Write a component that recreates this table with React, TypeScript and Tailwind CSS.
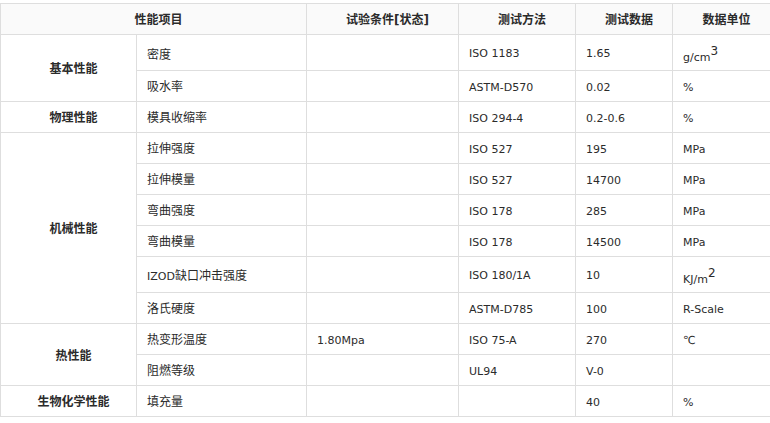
import React from "react";

type Row = {
  group?: { label: string; span: number };
  item: React.ReactNode;
  cond?: string;
  method?: string;
  value?: string;
  unit?: React.ReactNode;
  tall?: boolean;
};

const L = ({ children }: { children: React.ReactNode }) => (
  <span className="text-[11px]">{children}</span>
);

const rows: Row[] = [
  { group: { label: "基本性能", span: 2 }, item: "密度", method: "ISO 1183", value: "1.65", unit: (<><L>g/cm</L><sup className="text-[12px]">3</sup></>), tall: true },
  { item: "吸水率", method: "ASTM-D570", value: "0.02", unit: "%" },
  { group: { label: "物理性能", span: 1 }, item: "模具收缩率", method: "ISO 294-4", value: "0.2-0.6", unit: "%" },
  { group: { label: "机械性能", span: 6 }, item: "拉伸强度", method: "ISO 527", value: "195", unit: "MPa" },
  { item: "拉伸模量", method: "ISO 527", value: "14700", unit: "MPa" },
  { item: "弯曲强度", method: "ISO 178", value: "285", unit: "MPa" },
  { item: "弯曲模量", method: "ISO 178", value: "14500", unit: "MPa" },
  { item: (<><L>IZOD</L>缺口冲击强度</>), method: "ISO 180/1A", value: "10", unit: (<><L>KJ/m</L><sup className="text-[12px]">2</sup></>), tall: true },
  { item: "洛氏硬度", method: "ASTM-D785", value: "100", unit: "R-Scale" },
  { group: { label: "热性能", span: 2 }, item: "热变形温度", cond: "1.80Mpa", method: "ISO 75-A", value: "270", unit: "℃" },
  { item: "阻燃等级", method: "UL94", value: "V-0" },
  { group: { label: "生物化学性能", span: 1 }, item: "填充量", value: "40", unit: "%" },
];

const td = "border border-[#dedede] pl-[10px] pr-0 pt-[2px] pb-0 align-middle text-left";
const th = "border border-[#dedede] pl-[10px] pr-0 pt-[2px] pb-0 align-middle text-center font-bold text-[12px] bg-[#fafafa] h-[31px]";

export default function App() {
  return (
    <div
      className="w-[770px] h-[423px] bg-white pt-[3px] text-[#2b2b2b] text-[12px]"
      style={{ fontFamily: '"DejaVu Sans", "Noto Sans CJK SC", sans-serif' }}
    >
      <table className="w-[770px] table-fixed border-collapse leading-[14px]">
        <colgroup>
          <col className="w-[136px]" />
          <col className="w-[170px]" />
          <col className="w-[152px]" />
          <col className="w-[117px]" />
          <col className="w-[97px]" />
          <col className="w-[98px]" />
        </colgroup>
        <thead>
          <tr>
            <th colSpan={2} className={th}>性能项目</th>
            <th className={th}>试验条件[状态]</th>
            <th className={th}>测试方法</th>
            <th className={th}>测试数据</th>
            <th className={th}>数据单位</th>
          </tr>
        </thead>
        <tbody>
          {rows.map((r, i) => (
            <tr key={i}>
              {r.group && (
                <td rowSpan={r.group.span} className={`${td} text-center! font-bold`}>
                  {r.group.label}
                </td>
              )}
              <td className={`${td} ${r.tall ? "h-[36px] pt-[4px]!" : "h-[31px]"}`}>{r.item}</td>
              <td className={td}><L>{r.cond}</L></td>
              <td className={td}><L>{r.method}</L></td>
              <td className={td}><L>{r.value}</L></td>
              <td className={`${td} ${r.tall ? "pt-[10px]!" : ""}`}>{typeof r.unit === "string" ? <L>{r.unit}</L> : r.unit}</td>
            </tr>
          ))}
        </tbody>
      </table>
    </div>
  );
}
